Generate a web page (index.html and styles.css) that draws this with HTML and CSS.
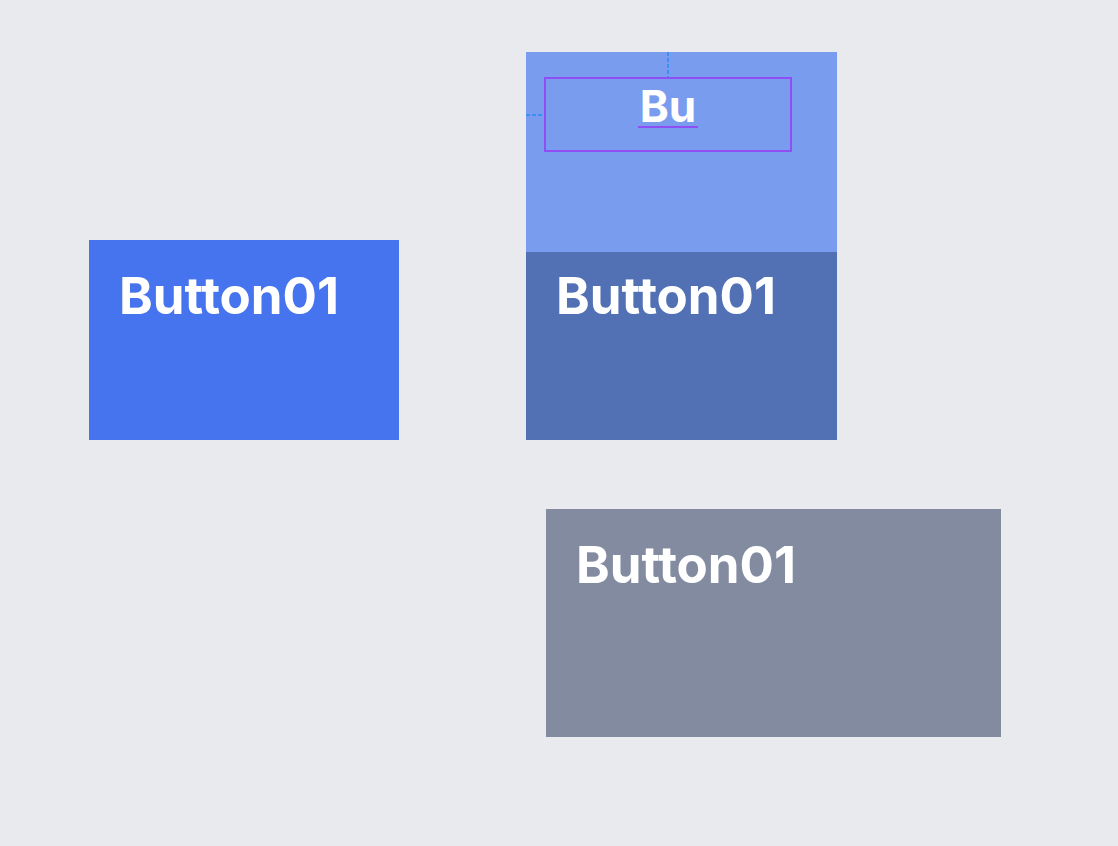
FILE: index.html
```html
<!DOCTYPE html>
<html lang="en">
<head>
    <meta charset="UTF-8">
    <title>Button01 canvas</title>
    <link rel="stylesheet" href="styles.css">
</head>
<body>
    <div class="canvas">
        <div class="frame btn-primary">
            <span class="btn-label">Button01</span>
        </div>

        <div class="frame btn-pressed">
            <span class="btn-label">Button01</span>
        </div>

        <!-- selected copy being edited -->
        <div class="frame btn-ghost">
            <div class="guide guide-v"></div>
            <div class="guide guide-h"></div>
            <div class="text-box">
                <span class="text-edit">Bu</span>
            </div>
        </div>

        <div class="frame btn-disabled">
            <span class="btn-label">Button01</span>
        </div>
    </div>
</body>
</html>
```

FILE: styles.css
```css
body {
    margin: 0;
    background: #e9eaee;
    font-family: Inter, "Noto Sans", sans-serif;
}
.canvas {
    position: relative;
    width: 1118px;
    height: 846px;
    overflow: hidden;
}
.frame {
    position: absolute;
    box-sizing: border-box;
    padding: 26px 30px;
    color: white;
}
.btn-label {
    display: block;
    font-size: 51px;
    font-weight: 700;
    line-height: 60px;
}
.btn-primary {
    left: 89px;
    top: 240px;
    width: 310px;
    height: 200px;
    background: #4574ee;
}
.btn-pressed {
    left: 526px;
    top: 240px;
    width: 311px;
    height: 200px;
    background: #5270b4;
}
.btn-ghost {
    left: 526px;
    top: 52px;
    width: 311px;
    height: 200px;
    padding: 25px 45px 0 18px;
    background: #7a9cee;
    z-index: 2;
}
.btn-disabled {
    left: 546px;
    top: 509px;
    width: 455px;
    height: 228px;
    background: #838ba0;
}
.text-box {
    height: 75px;
    box-sizing: border-box;
    border: 2px solid #8f4ff5;
    padding-top: 7px;
    text-align: center;
}
.text-edit {
    display: inline-block;
    font-size: 44px;
    font-weight: 700;
    line-height: 40px;
    padding: 0 2px;
    border-bottom: 2px solid #8f4ff5;
}
.guide {
    position: absolute;
}
.guide-v {
    left: 141px;
    top: 0;
    width: 2px;
    height: 25px;
    background: repeating-linear-gradient(to bottom, #3b90f6 0 4px, transparent 4px 6px);
}
.guide-h {
    left: 0;
    top: 62px;
    width: 18px;
    height: 2px;
    background: repeating-linear-gradient(to right, #3b90f6 0 4px, transparent 4px 6px);
}
```
